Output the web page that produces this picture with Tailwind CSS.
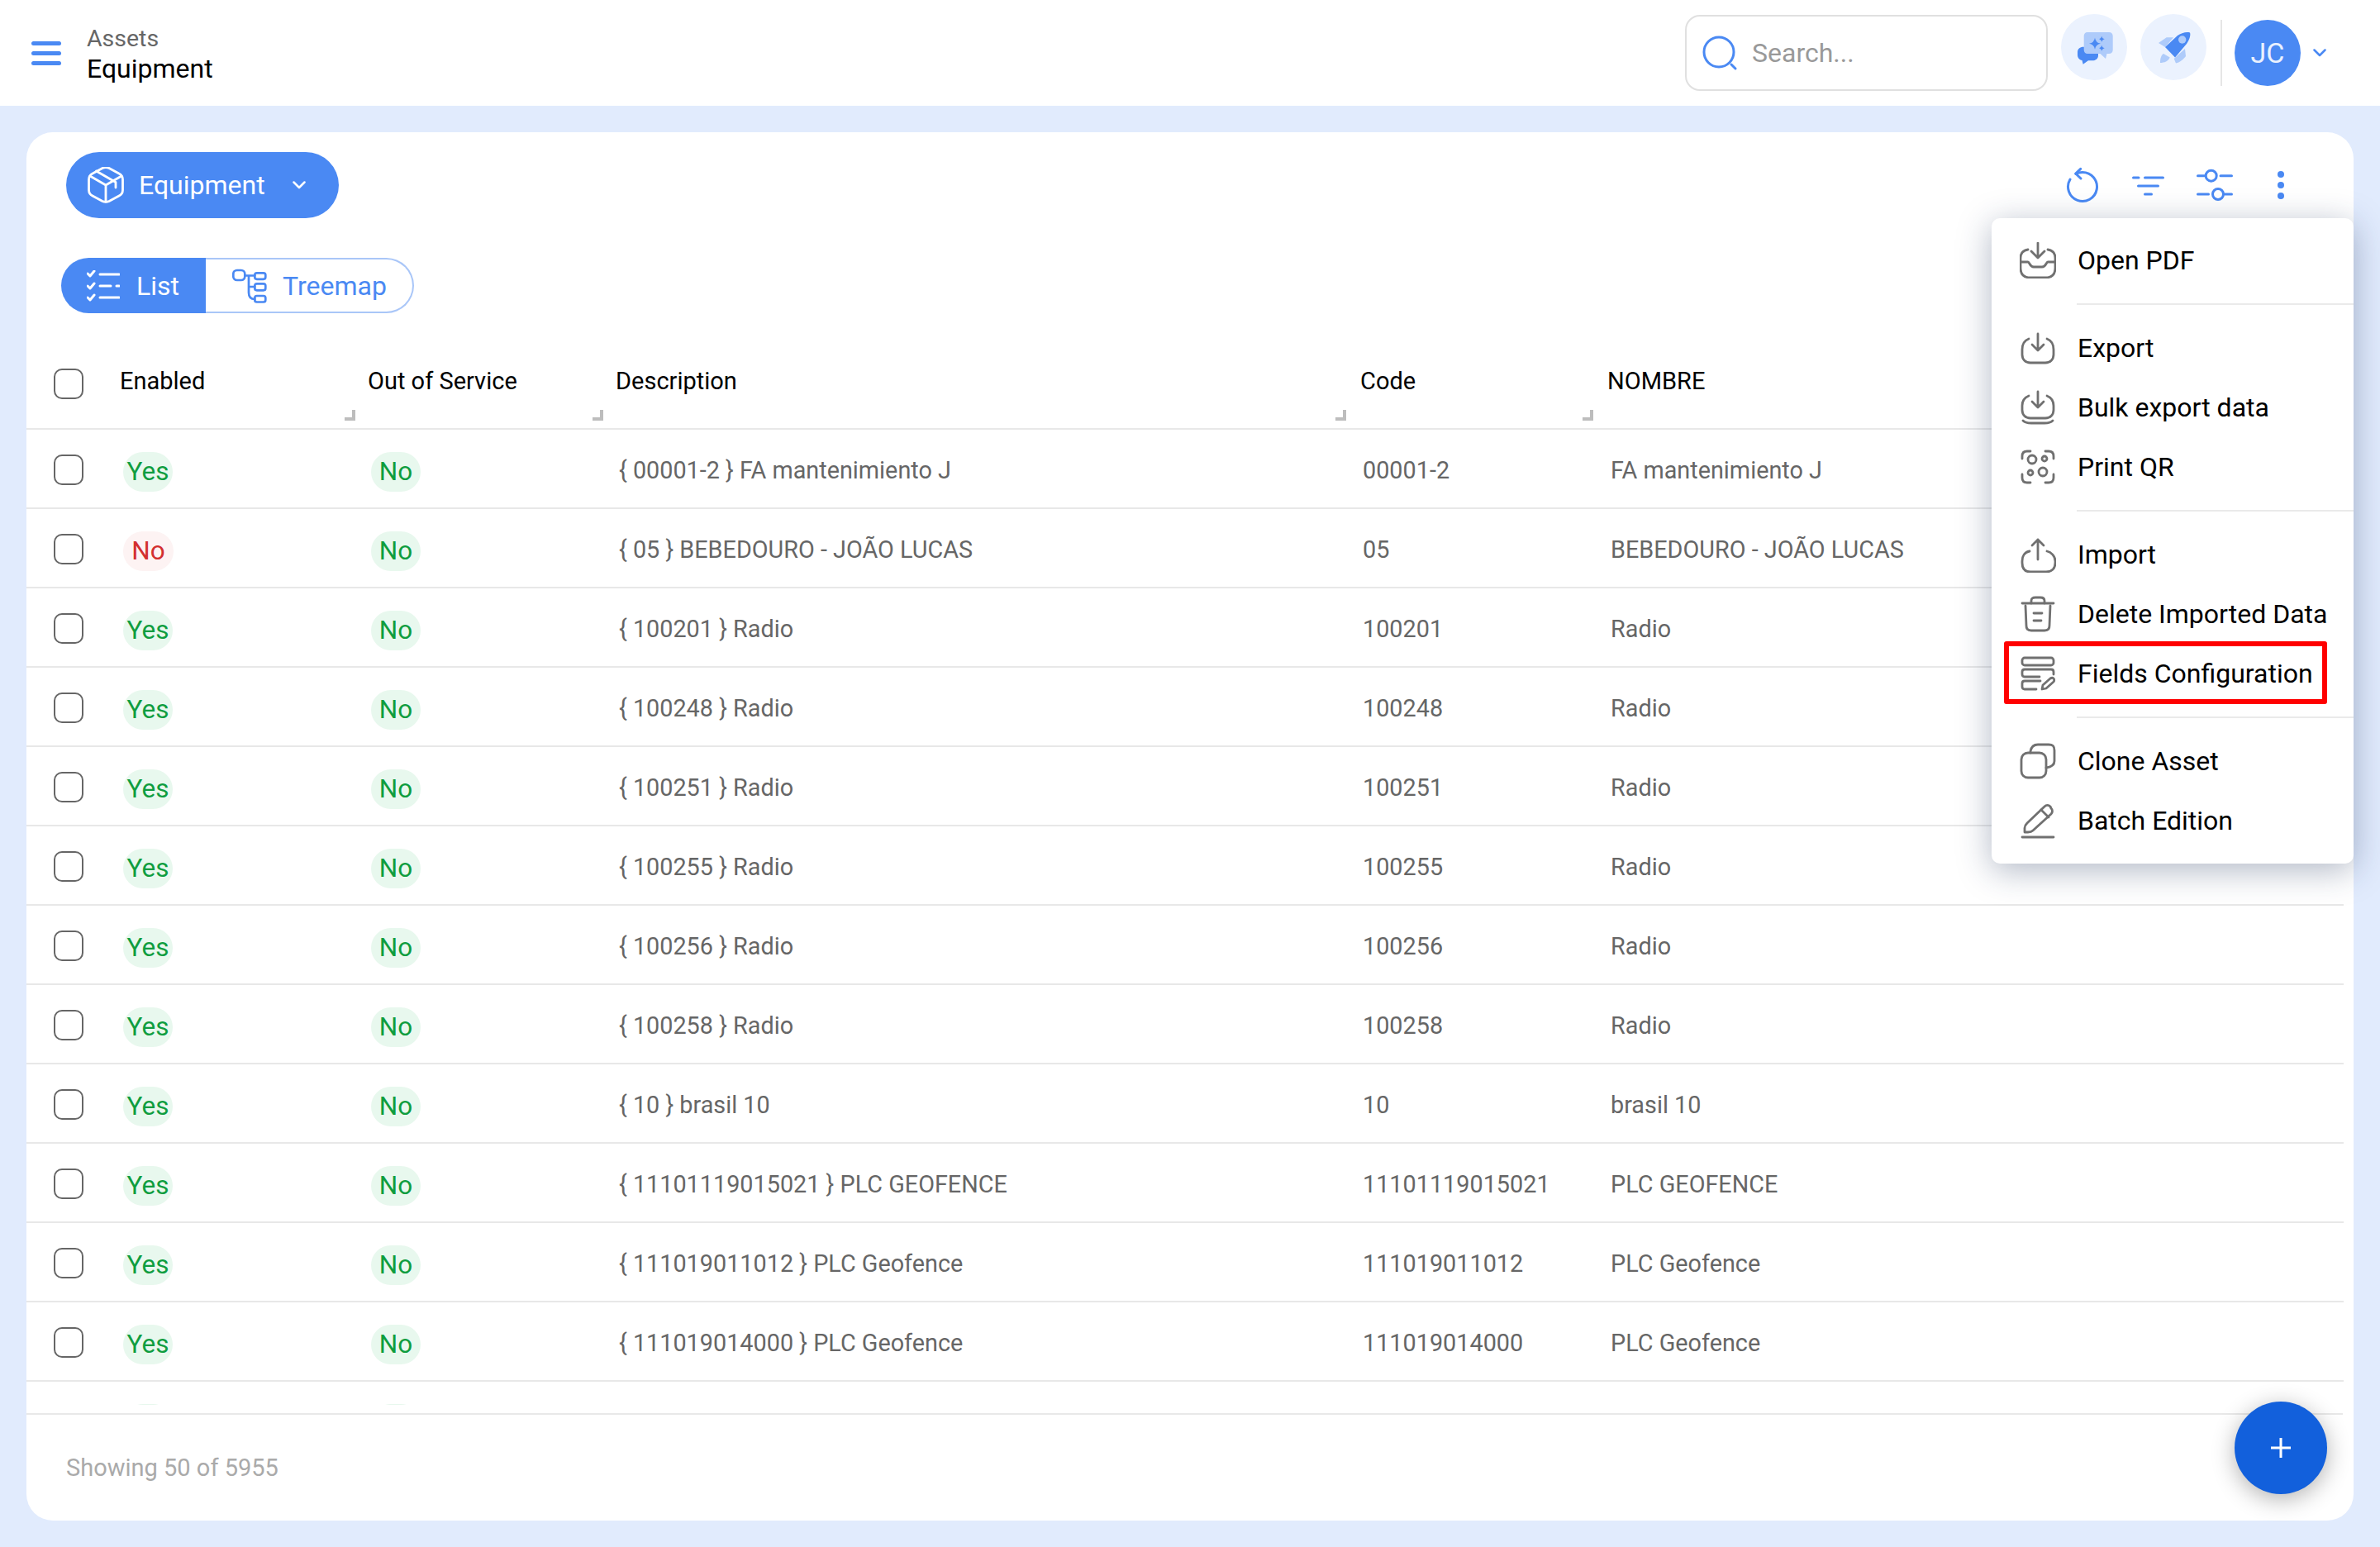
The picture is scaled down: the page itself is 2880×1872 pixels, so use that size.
<!DOCTYPE html>
<html lang="en">

<head>
    <meta charset="UTF-8">
    <title>Assets - Equipment</title>
    <script src="https://cdn.jsdelivr.net/npm/@tailwindcss/browser@4"></script>
</head>

<body class="font-[Roboto,sans-serif] bg-[#e1ebfd]">
    <div class="relative w-[2880px] h-[1872px] overflow-hidden">

        <!-- top bar -->
        <header class="h-[128px] bg-white flex items-center">
            <div class="ml-[38px] w-[36px] flex flex-col gap-[7px]">
                <span class="h-[5px] rounded-full bg-[#4a89f3]"></span>
                <span class="h-[5px] rounded-full bg-[#4a89f3]"></span>
                <span class="h-[5px] rounded-full bg-[#4a89f3]"></span>
            </div>
            <div class="ml-[31px] pt-[2px]">
                <div class="text-[28.5px] leading-[36px] text-[#666666]">Assets</div>
                <div class="text-[32px] leading-[36px] text-black">Equipment</div>
            </div>
            <div class="ml-auto pr-[65px] flex items-center">
                <div class="w-[439px] h-[92px] border-2 border-[#e0e0e0] rounded-[18px] flex items-center pl-[19px] gap-[18px]">
                    <svg class="w-[42px] h-[42px]" viewBox="0 0 42 42" fill="none" stroke="#4a89f3" stroke-width="3" stroke-linecap="round">
                        <circle cx="20" cy="20" r="18" />
                        <path d="M35 35 L40 40" />
                    </svg>
                    <span class="text-[32px] text-[#999999]">Search...</span>
                </div>
                <div class="ml-[16px] mb-[14px] w-[80px] h-[80px] rounded-full bg-[#ebf2fe] flex items-center justify-center">
                    <svg class="w-[48px] h-[48px]" viewBox="0 0 48 48">
                        <path fill="#4a89f3" d="M11 23.700 H22 C26 23.700 29 26 29 30 V34 C29 38 26 40.300 22 40.300 H17 L10.700 44.700 L9.500 40 C6 39.500 4 37 4 33 V30 C4 26 7 23.700 11 23.700Z" />
                        <path fill="#aecbfa" d="M16 6 H42 C45 6 46.700 8 46.700 10.500 V27.500 C46.700 30 45 32 42 32 H39.500 L38 38 L31.500 32 H16 C13.500 32 11.700 30 11.700 27.500 V10.500 C11.700 8 13.500 6 16 6Z" />
                        <path fill="#4a89f3" d="M25 12.700 Q26 18.700 32 19.700 Q26 20.700 25 26.700 Q24 20.700 18 19.700 Q24 18.700 25 12.700Z M33.300 10.800 Q33.800 13.800 36.800 14.300 Q33.800 14.800 33.300 17.800 Q32.800 14.800 29.800 14.300 Q32.800 13.800 33.300 10.800Z M33.300 21.800 Q33.800 24.800 36.800 25.300 Q33.800 25.800 33.300 28.800 Q32.800 25.800 29.800 25.300 Q32.800 24.800 33.300 21.800Z" />
                    </svg>
                </div>
                <div class="ml-[16px] mb-[14px] w-[80px] h-[80px] rounded-full bg-[#ebf2fe] flex items-center justify-center">
                    <svg class="w-[48px] h-[48px]" viewBox="0 0 48 48">
                        <path fill="#aecbfa" d="M6 19 L15.700 12.300 H24 L14 24Z M38 26 L39 35 C37 38 31 43 27 43.500 L24.700 38Z M8 43 C8 38 9 34 12 32 L19.700 36.500 C18 41 13 43 8 43Z" />
                        <path fill="#4a89f3" d="M44 6.500 C45 9 44 14 40 20 L26 36.500 L14 24 L29 10 C33 7 40 5 44 6.500Z" />
                        <circle cx="34.700" cy="15" r="4.700" fill="#aecbfa" />
                    </svg>
                </div>
                <div class="ml-[17px] w-[2px] h-[80px] bg-[#e6e6e6]"></div>
                <div class="ml-[15px] w-[80px] h-[80px] rounded-full bg-[#4a89f3] text-[#eaf1fe] text-[34px] flex items-center justify-center">JC</div>
                <svg class="ml-[15px] w-[16px] h-[10px]" viewBox="0 0 16 10" fill="none" stroke="#4a89f3" stroke-width="2.5" stroke-linecap="round" stroke-linejoin="round">
                    <path d="M1.500 1.500 L8 8 L14.500 1.500" />
                </svg>
            </div>
        </header>

        <main class="p-[32px]">
            <section class="h-[1680px] bg-white rounded-[32px] pt-[24px]">

                <div class="flex items-center justify-between pl-[48px] pr-[48px]">
                    <button class="h-[80px] w-[330px] rounded-full bg-[#4a89f3] text-white text-[32px] flex items-center pl-[26px]">
                        <svg class="w-[44px] h-[44px]" viewBox="0 0 44 44" fill="none" stroke="white" stroke-width="2.800" stroke-linejoin="round" stroke-linecap="round">
                            <path d="M18 1.500 C20.500 0.300 23.500 0.300 26 1.500 L38 8 C41 9.500 42.500 12 42.500 15 V28 C42.500 31 41 33.500 38 35 L26 41.500 C23.500 42.700 20.500 42.700 18 41.500 L6 35 C3 33.500 1.500 31 1.500 28 V15 C1.500 12 3 9.500 6 8Z" />
                            <path d="M3 11 L22 22 L41 11 M22 22 V42 M10.500 5 L34 18.500 V25" />
                        </svg>
                        <span class="ml-[18px]">Equipment</span>
                        <svg class="ml-[33px] w-[16px] h-[10px]" viewBox="0 0 16 10" fill="none" stroke="white" stroke-width="2.5" stroke-linecap="round" stroke-linejoin="round">
                            <path d="M1.500 1.500 L8 8 L14.500 1.500" />
                        </svg>
                    </button>

                    <div class="flex text-[#4a89f3]">
                        <div class="w-[80px] h-[80px] flex items-center justify-center">
                            <svg class="w-[42px] h-[44px]" viewBox="0 0 42 44" fill="none" stroke="currentColor" stroke-width="3" stroke-linecap="round" stroke-linejoin="round">
                                <path d="M13 8.500 C15 7 18 6.500 21 6.500 A17.500 17.500 0 1 1 6 15" />
                                <path d="M18.700 2.300 L12.700 8 L19 14" />
                            </svg>
                        </div>
                        <div class="w-[80px] h-[80px] flex items-center justify-center">
                            <svg class="w-[40px] h-[28px]" viewBox="0 0 40 28" fill="none" stroke="currentColor" stroke-width="3" stroke-linecap="round">
                                <path d="M1.500 5 H8 M15.500 5 H37.500 M7.500 15 H31.500 M15.500 25 H23.500" />
                            </svg>
                        </div>
                        <div class="w-[80px] h-[80px] flex items-center justify-center">
                            <svg class="w-[44px] h-[40px]" viewBox="0 0 44 40" fill="none" stroke="currentColor" stroke-width="3" stroke-linecap="round">
                                <path d="M1.500 8.700 H10 M29 8.700 H42.500 M1.500 31 H14.500 M34 31 H42.500" />
                                <circle cx="17.700" cy="8.700" r="6.500" />
                                <circle cx="26" cy="31" r="6.500" />
                            </svg>
                        </div>
                        <div class="w-[80px] h-[80px] flex flex-col items-center justify-center gap-[5px]">
                            <span class="w-[8px] h-[8px] rounded-full bg-[#4a89f3]"></span>
                            <span class="w-[8px] h-[8px] rounded-full bg-[#4a89f3]"></span>
                            <span class="w-[8px] h-[8px] rounded-full bg-[#4a89f3]"></span>
                        </div>
                    </div>
                </div>

                <!-- view switch -->
                <div class="ml-[42px] mt-[48px] w-[427px] h-[67px] flex text-[32px]">
                    <div class="w-[175px] rounded-l-full bg-[#4a89f3] text-white flex items-center pl-[31px] gap-[20px]">
                        <svg class="w-[40px] h-[38px]" viewBox="0 0 40 38" fill="none" stroke="white" stroke-width="3" stroke-linecap="round" stroke-linejoin="round">
                            <path d="M1 4 L4 7 L9 1 M1 19 L4 22 L9 16 M1 33 L4 36 L9 30" />
                            <path d="M16 5 H39 M16 19 H29 M36 19 H39 M16 33 H39" />
                        </svg>
                        <span>List</span>
                    </div>
                    <div class="flex-1 border-2 border-l-0 border-[#a9c6f8] rounded-r-full text-[#4a89f3] flex items-center pl-[32px] gap-[19px]">
                        <svg class="w-[42px] h-[42px]" viewBox="0 0 42 42" fill="none" stroke="currentColor" stroke-width="2.700" stroke-linejoin="round" stroke-linecap="round">
                            <rect x="1.300" y="2" width="14" height="12" rx="4.500" />
                            <rect x="27.300" y="5.300" width="13" height="7.500" rx="2.500" />
                            <rect x="27.300" y="18.300" width="13" height="8" rx="2.500" />
                            <rect x="27.300" y="33" width="13" height="7.500" rx="2.500" />
                            <path d="M15.300 8.500 H27.300 M20 8.500 V29 C20 34 22 37 27.300 37 M20 22 H27.300" />
                        </svg>
                        <span>Treemap</span>
                    </div>
                </div>

                <!-- table head -->
                <div class="mt-[34px] h-[107px] w-[2804px] border-b-2 border-[#e8e8e8] grid grid-cols-[113px_300px_300px_901px_299px_1fr] text-[29px] leading-[40px] text-black">
                    <div class="pl-[33px] pt-[33px]">
                        <span class="block w-[36px] h-[37px] rounded-[10px] border-[2.5px] border-[#666666]"></span>
                    </div>
                    <div class="relative pt-[28px]">Enabled<span class="absolute right-[15px] bottom-[9px] w-[13px] h-[13px] border-r-[4px] border-b-[4px] border-[#bdbdbd]"></span></div>
                    <div class="relative pt-[28px]">Out of Service<span class="absolute right-[15px] bottom-[9px] w-[13px] h-[13px] border-r-[4px] border-b-[4px] border-[#bdbdbd]"></span></div>
                    <div class="relative pt-[28px]">Description<span class="absolute right-[17px] bottom-[9px] w-[13px] h-[13px] border-r-[4px] border-b-[4px] border-[#bdbdbd]"></span></div>
                    <div class="relative pt-[28px]">Code<span class="absolute right-[17px] bottom-[9px] w-[13px] h-[13px] border-r-[4px] border-b-[4px] border-[#bdbdbd]"></span></div>
                    <div class="pt-[28px]">NOMBRE</div>
                </div>

                <!-- rows get filled in below, the last one is cut off on purpose -->
                <div id="rows" class="h-[1180px] w-[2804px] overflow-hidden"></div>

                <div class="mt-[10px] w-[2803px] h-[129px] border-t-2 border-[#e8e8e8] flex items-center pl-[48px] pt-[2px] text-[29px] text-[#aaaaaa]">Showing 50 of 5955</div>
            </section>
        </main>

        <!-- actions menu -->
        <div class="absolute left-[2410px] top-[264px] w-[438px] h-[781px] bg-white rounded-[10px] shadow-[0_8px_40px_rgba(30,50,90,0.35)] py-[15px] text-[32px] text-black">
            <div class="h-[72px] flex items-center pl-[34px] gap-[26px]">
                <svg class="w-[44px] h-[44px]" viewBox="0 0 44 44" fill="none" stroke="#707070" stroke-width="2.800" stroke-linecap="round" stroke-linejoin="round">
                    <path d="M22 1 V18 M14 11 L22 19 L30 11" />
                    <path d="M10 9 C4 10 1 13 1 19 V31 C1 39 5 43 13 43 H31 C39 43 43 39 43 31 V19 C43 13 40 10 34 9" />
                    <path d="M1 24 H10 C12 24 12 30 17 30 H27 C32 30 32 24 34 24 H43" />
                </svg>
                <span>Open PDF</span>
            </div>
            <div class="ml-[103px] my-[16px] h-[2px] bg-[#eaeaea]"></div>
            <div class="h-[72px] flex items-center pl-[34px] gap-[26px]">
                <svg class="w-[44px] h-[44px]" viewBox="0 0 44 44" fill="none" stroke="#707070" stroke-width="2.800" stroke-linecap="round" stroke-linejoin="round">
                    <path d="M22 5 V24 M15 18 L22 25 L29 18" />
                    <path d="M11 11 C6 13 3 17 3 24 V30 C3 36 7 40 13 40 H31 C37 40 41 36 41 30 V24 C41 17 38 13 33 11" />
                </svg>
                <span>Export</span>
            </div>
            <div class="h-[72px] flex items-center pl-[34px] gap-[26px]">
                <svg class="w-[44px] h-[44px]" viewBox="0 0 44 44" fill="none" stroke="#707070" stroke-width="2.800" stroke-linecap="round" stroke-linejoin="round">
                    <path d="M22 3 V21 M15 15 L22 22 L29 15" />
                    <path d="M11 8 C6 10 3 14 3 20 V25 C3 31 7 35 13 35 H31 C37 35 41 31 41 25 V20 C41 14 38 10 33 8" />
                    <path d="M4 38 C7 41 10 41 14 41 H30 C34 41 37 41 40 38" />
                </svg>
                <span>Bulk export data</span>
            </div>
            <div class="h-[72px] flex items-center pl-[34px] gap-[26px]">
                <svg class="w-[44px] h-[44px]" viewBox="0 0 44 44" fill="none" stroke="#707070" stroke-width="2.800" stroke-linecap="round" stroke-linejoin="round">
                    <path d="M3 12 V9 C3 5 5 3 9 3 H13 M31 3 H35 C39 3 41 5 41 9 V12 M3 31 V35 C3 39 5 41 9 41 H13 M31 41 H35 C39 41 41 39 41 35 V31" />
                    <circle cx="15" cy="13" r="5" />
                    <circle cx="30" cy="12" r="3" />
                    <circle cx="13" cy="29" r="3" />
                    <circle cx="28" cy="28" r="5" />
                </svg>
                <span>Print QR</span>
            </div>
            <div class="ml-[103px] my-[16px] h-[2px] bg-[#eaeaea]"></div>
            <div class="h-[72px] flex items-center pl-[34px] gap-[26px]">
                <svg class="w-[44px] h-[44px]" viewBox="0 0 44 44" fill="none" stroke="#707070" stroke-width="2.800" stroke-linecap="round" stroke-linejoin="round">
                    <path d="M22 4 V28 M15 11 L22 4 L29 11" />
                    <path d="M12 18 C6 19 3 24 3 30 V32 C3 39 6 43 13 43 H32 C39 43 43 39 43 32 V30 C43 24 38 19 33 18" />
                </svg>
                <span>Import</span>
            </div>
            <div class="h-[72px] flex items-center pl-[34px] gap-[26px]">
                <svg class="w-[44px] h-[44px]" viewBox="0 0 44 44" fill="none" stroke="#707070" stroke-width="2.800" stroke-linecap="round" stroke-linejoin="round">
                    <path d="M3 9 H41" />
                    <path d="M14 9 V6 C14 3 16 2 19 2 H25 C28 2 30 3 30 6 V9" />
                    <path d="M7 12 L8 36 C8 40 10 42 14 42 H30 C34 42 36 40 36 36 L37 12" />
                    <path d="M17 21 H27 M17 30 H26" />
                </svg>
                <span>Delete Imported Data</span>
            </div>
            <div class="relative h-[72px] flex items-center pl-[34px] gap-[26px]">
                <svg class="w-[44px] h-[44px]" viewBox="0 0 44 44" fill="none" stroke="#707070" stroke-width="2.800" stroke-linecap="round" stroke-linejoin="round">
                    <rect x="3" y="3" width="38" height="9" rx="3" />
                    <path d="M24 26 H6 C4 26 3 25 3 23 V20 C3 18 4 17 6 17 H38 C40 17 41 18 41 20 V23" />
                    <path d="M20 41 H6 C4 41 3 40 3 38 V34 C3 32 4 31 6 31 H25" />
                    <path d="M27 41 L28 36 L37 28 C38.500 27 40 27 41 28 C42 29 42 31 41 32 L32 40Z" />
                </svg>
                <span>Fields Configuration</span>
                <span class="absolute left-[15px] top-[-3px] w-[391px] h-[76px] border-[6px] border-[#ff0000] rounded-[3px]"></span>
            </div>
            <div class="ml-[103px] my-[16px] h-[2px] bg-[#eaeaea]"></div>
            <div class="h-[72px] flex items-center pl-[34px] gap-[26px]">
                <svg class="w-[44px] h-[44px]" viewBox="0 0 44 44" fill="none" stroke="#707070" stroke-width="2.800" stroke-linecap="round" stroke-linejoin="round">
                    <rect x="2" y="12" width="30" height="30" rx="8" />
                    <path d="M13 12 V10 C14 5 17 2 22 2 H35 C40 2 42 4 42 9 V22 C42 26 39 29 32 30" />
                </svg>
                <span>Clone Asset</span>
            </div>
            <div class="h-[72px] flex items-center pl-[34px] gap-[26px]">
                <svg class="w-[44px] h-[44px]" viewBox="0 0 44 44" fill="none" stroke="#707070" stroke-width="2.800" stroke-linecap="round" stroke-linejoin="round">
                    <path d="M30 5 C32 3 35 3 37 5 L38 7 C40 9 40 12 38 14 L16 34 C14 36 13 36 10 36 H6 V31 C6 28 7 27 9 25Z" />
                    <path d="M26 9 L35 18" />
                    <path d="M3 42 H41" />
                </svg>
                <span>Batch Edition</span>
            </div>
        </div>

        <button class="absolute left-[2704px] top-[1696px] w-[112px] h-[112px] rounded-full bg-[#1260dc] shadow-[0_6px_28px_rgba(0,0,0,0.3)] flex items-center justify-center">
            <svg class="w-[26px] h-[26px]" viewBox="0 0 26 26" fill="none" stroke="white" stroke-width="3">
                <path d="M13 1 V25 M1 13 H25" />
            </svg>
        </button>
    </div>

    <script>
        // enabled, code, name
        const rows = [
            [true, "00001-2", "FA mantenimiento J"],
            [false, "05", "BEBEDOURO - JOÃO LUCAS"],
            [true, "100201", "Radio"],
            [true, "100248", "Radio"],
            [true, "100251", "Radio"],
            [true, "100255", "Radio"],
            [true, "100256", "Radio"],
            [true, "100258", "Radio"],
            [true, "10", "brasil 10"],
            [true, "11101119015021", "PLC GEOFENCE"],
            [true, "111019011012", "PLC Geofence"],
            [true, "111019014000", "PLC Geofence"],
        ];

        const greenPill = "ml-[4px] h-[48px] min-w-[60px] px-[4px] rounded-[24px] bg-[#e8f8ee] text-[#0f9d3f] text-[31.5px] flex items-center justify-center";
        const redPill = "ml-[4px] h-[48px] min-w-[61px] px-[4px] rounded-[24px] bg-[#fdf3f3] text-[#d32f2f] text-[31.5px] flex items-center justify-center";
        const rowClass = "h-[96px] border-b-2 border-[#e8e8e8] grid grid-cols-[113px_300px_300px_901px_299px_1fr] items-center text-[28.8px] text-[#666666]";
        const checkbox = '<div class="pl-[33px] pt-[2px]"><span class="block w-[36px] h-[37px] rounded-[10px] border-[2.5px] border-[#666666]"></span></div>';

        let html = "";
        for (const [enabled, code, name] of rows) {
            html += `<div class="${rowClass}">${checkbox}
                <div class="flex pt-[8px]"><span class="${enabled ? greenPill : redPill}">${enabled ? "Yes" : "No"}</span></div>
                <div class="flex pt-[8px]"><span class="${greenPill}">No</span></div>
                <div class="pl-[4px] pt-[6px]">{ ${code} } ${name}</div>
                <div class="pl-[3px] pt-[6px]">${code}</div>
                <div class="pl-[4px] pt-[6px]">${name}</div>
            </div>`;
        }
        // top edge of the next row's pills still shows above the footer
        html += `<div class="${rowClass}">${checkbox}
            <div class="flex pt-[8px]"><span class="${greenPill}"></span></div>
            <div class="flex pt-[8px]"><span class="${greenPill}"></span></div>
        </div>`;
        document.getElementById("rows").innerHTML = html;
    </script>
</body>

</html>
